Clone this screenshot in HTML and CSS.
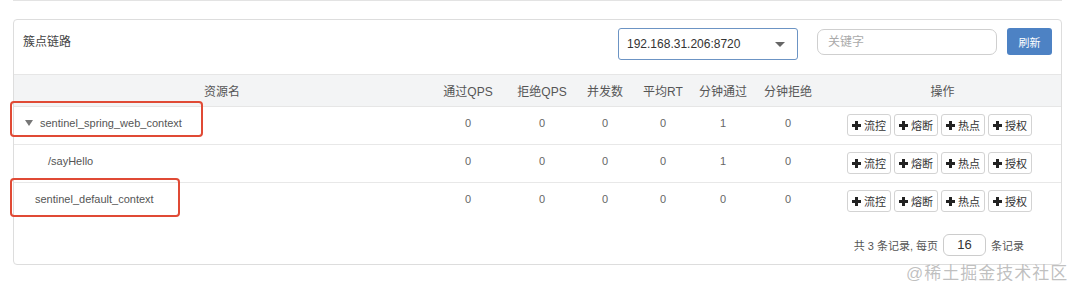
FILE: index.html
```html
<!DOCTYPE html>
<html lang="zh-CN">
<head>
  <meta charset="UTF-8" />
  <meta name="viewport" content="width=device-width, initial-scale=1.0"/>
  <title>簇点链路</title>
  <link rel="stylesheet" href="styles.css">
</head>
<body>
  <div class="page">
    <div class="prev-card"></div>

    <div class="card">
      <div class="card-head">
        <span class="card-title">簇点链路</span>
        <div class="tools">
          <div class="machine">
            <span>192.168.31.206:8720</span>
            <span class="caret"></span>
          </div>
          <input class="keyword" type="text" placeholder="关键字" />
          <button class="btn-refresh">刷新</button>
        </div>
      </div>

      <table class="tree">
        <colgroup>
          <col style="width:416px">
          <col style="width:76px">
          <col style="width:72px">
          <col style="width:54px">
          <col style="width:62px">
          <col style="width:58px">
          <col style="width:72px">
          <col>
        </colgroup>
        <thead>
          <tr>
            <th>资源名</th>
            <th>通过QPS</th>
            <th>拒绝QPS</th>
            <th>并发数</th>
            <th>平均RT</th>
            <th>分钟通过</th>
            <th>分钟拒绝</th>
            <th>操作</th>
          </tr>
        </thead>
        <tbody>
          <tr>
            <td class="name lvl0"><span class="tri"></span>sentinel_spring_web_context</td>
            <td>0</td><td>0</td><td>0</td><td>0</td><td>1</td><td>0</td>
            <td class="ops">
              <div class="op-group">
                <button class="op"><i class="plus"></i>流控</button>
                <button class="op"><i class="plus"></i>熔断</button>
                <button class="op"><i class="plus"></i>热点</button>
                <button class="op"><i class="plus"></i>授权</button>
              </div>
            </td>
          </tr>
          <tr>
            <td class="name lvl1">/sayHello</td>
            <td>0</td><td>0</td><td>0</td><td>0</td><td>1</td><td>0</td>
            <td class="ops">
              <div class="op-group">
                <button class="op"><i class="plus"></i>流控</button>
                <button class="op"><i class="plus"></i>熔断</button>
                <button class="op"><i class="plus"></i>热点</button>
                <button class="op"><i class="plus"></i>授权</button>
              </div>
            </td>
          </tr>
          <tr>
            <td class="name lvl2">sentinel_default_context</td>
            <td>0</td><td>0</td><td>0</td><td>0</td><td>0</td><td>0</td>
            <td class="ops">
              <div class="op-group">
                <button class="op"><i class="plus"></i>流控</button>
                <button class="op"><i class="plus"></i>熔断</button>
                <button class="op"><i class="plus"></i>热点</button>
                <button class="op"><i class="plus"></i>授权</button>
              </div>
            </td>
          </tr>
        </tbody>
      </table>

      <div class="pager">
        <span>共 3 条记录, 每页</span>
        <input class="page-size" type="text" value="16" />
        <span>条记录</span>
      </div>

      <!-- annotation boxes -->
      <div class="mark mark-1"></div>
      <div class="mark mark-2"></div>
    </div>

    <div class="watermark">@稀土掘金技术社区</div>
  </div>
</body>
</html>
```

FILE: styles.css
```css
body {
  margin: 0;
  background: #ffffff;
  font-family: "Liberation Sans", "Noto Sans CJK SC", sans-serif;
  color: #555;
}

.page {
  position: relative;
  width: 1080px;
  height: 291px;
  padding: 0 18px 0 13px;
  box-sizing: border-box;
  overflow: hidden;
}

.prev-card {
  height: 0;
  border-bottom: 1px solid #e3e3e3;
}

.card {
  position: relative;
  margin-top: 18px;
  border: 1px solid #dddddd;
  border-radius: 4px;
  height: 246px;
  box-sizing: border-box;
}

.card-head {
  display: flex;
  justify-content: space-between;
  align-items: flex-start;
  height: 54px;
  padding: 8px 9px 0 9px;
  box-sizing: border-box;
}

.card-title {
  font-size: 12px;
  color: #444;
  margin-top: 4px;
}

.tools {
  display: flex;
  align-items: flex-start;
}

.machine {
  display: flex;
  align-items: center;
  justify-content: space-between;
  width: 180px;
  height: 32px;
  padding: 0 12px 0 8px;
  box-sizing: border-box;
  border: 1px solid #6c94c4;
  border-radius: 3px;
  font-size: 12px;
  color: #333;
}

.caret {
  width: 0;
  height: 0;
  border-left: 5px solid transparent;
  border-right: 5px solid transparent;
  border-top: 5px solid #666;
}

.keyword {
  width: 180px;
  height: 26px;
  margin: 1px 0 0 19px;
  padding: 0 10px;
  box-sizing: border-box;
  border: 1px solid #cfcfcf;
  border-radius: 7px;
  font-family: inherit;
  font-size: 12px;
  outline: none;
}

.keyword::placeholder {
  color: #aaa;
}

.btn-refresh {
  width: 45px;
  height: 27px;
  margin-left: 10px;
  border: none;
  border-radius: 3px;
  background: #4d82c4;
  color: #fff;
  font-family: inherit;
  font-size: 11px;
  padding: 0;
}

.tree {
  width: 100%;
  border-collapse: collapse;
  table-layout: fixed;
}

.tree th {
  height: 32px;
  background: #f3f4f5;
  font-weight: normal;
  font-size: 12px;
  color: #555;
  border-top: 1px solid #e6e6e6;
  border-bottom: 1px solid #e6e6e6;
  padding: 0;
  box-sizing: border-box;
}

.tree td {
  height: 38px;
  box-sizing: border-box;
  border-bottom: 1px solid #e8e8e8;
  text-align: center;
  vertical-align: top;
  padding: 10px 0 0;
  font-size: 11px;
  line-height: 12px;
  color: #666;
}

.tree tbody tr:last-child td {
  border-bottom: none;
}

.tree td.name {
  text-align: left;
  color: #555;
}

.lvl0 { padding-left: 11px !important; }
.lvl1 { padding-left: 34px !important; }
.lvl2 { padding-left: 21px !important; }

.tri {
  display: inline-block;
  width: 0;
  height: 0;
  margin-right: 7px;
  vertical-align: 1px;
  border-left: 4px solid transparent;
  border-right: 4px solid transparent;
  border-top: 6px solid #777;
}

.tree td.ops {
  padding-top: 7px;
}

.op-group {
  display: flex;
  gap: 3px;
  padding-left: 23px;
}

.op {
  display: inline-flex;
  align-items: center;
  gap: 3px;
  height: 22px;
  width: 44px;
  padding: 0 0 0 4px;
  box-sizing: border-box;
  border: 1px solid #d3d3d3;
  border-radius: 3px;
  background: #fff;
  color: #333;
  font-family: inherit;
  font-size: 11px;
}

.plus {
  position: relative;
  display: inline-block;
  width: 9px;
  height: 9px;
}

.plus::before,
.plus::after {
  content: "";
  position: absolute;
  background: #222;
}

.plus::before {
  left: 0;
  top: 3px;
  width: 9px;
  height: 3px;
}

.plus::after {
  left: 3px;
  top: 0;
  width: 3px;
  height: 9px;
}

.pager {
  display: flex;
  justify-content: flex-end;
  align-items: center;
  gap: 5px;
  padding: 13px 37px 0 0;
  font-size: 11px;
  color: #555;
}

.page-size {
  width: 43px;
  height: 22px;
  box-sizing: border-box;
  border: 1px solid #ccc;
  border-radius: 6px;
  text-align: center;
  font-family: inherit;
  font-size: 13px;
  color: #333;
  outline: none;
}

.mark {
  position: absolute;
  border: 2px solid #e04a35;
  border-radius: 4px;
}

.mark-1 {
  left: -4px;
  top: 81px;
  width: 189px;
  height: 32px;
}

.mark-2 {
  left: -4px;
  top: 158px;
  width: 166px;
  height: 35px;
}

.watermark {
  position: absolute;
  left: 906px;
  top: 259px;
  font-size: 17px;
  color: rgba(150, 150, 150, 0.6);
  letter-spacing: 1px;
  white-space: nowrap;
}
```
